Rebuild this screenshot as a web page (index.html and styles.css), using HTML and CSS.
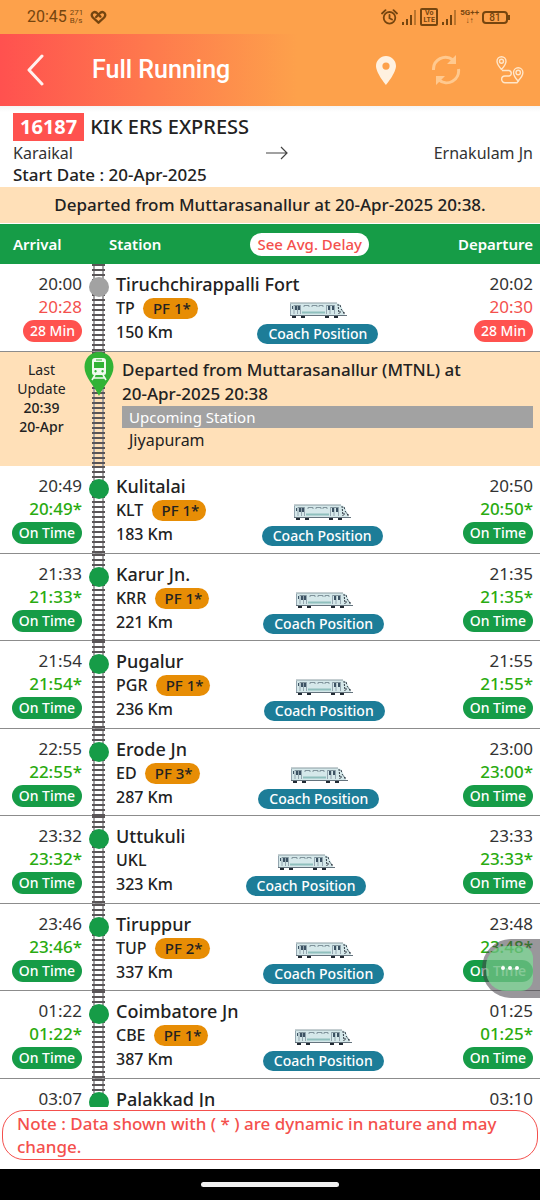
FILE: index.html
```html
<!DOCTYPE html>
<html lang="en">
<head>
    <meta charset="UTF-8">
    <meta name="viewport" content="width=device-width, initial-scale=1.0">
    <title>Full Running</title>
    <link rel="stylesheet" href="styles.css">
</head>
<body>
    <!-- Shared drawings -->
    <svg class="sprite" aria-hidden="true">
        <symbol id="train" viewBox="0 0 58 16">
            <path d="M1 1h46l4 1 4 8 1 3H1z" fill="#d5e8ea"/>
            <path d="M1 1h47" stroke="#8b9ca2" stroke-width="1"/>
            <path d="M13 9.500h23v2H13z" fill="#8fbfbd"/>
            <path d="M1 13.500h57" stroke="#65737d" stroke-width="1"/>
            <path d="M1.500 2v11M5 3v9M8.500 3v9M11.500 3v9M37.500 3v9M41 3v9M45.500 3v9" stroke="#93a5af" stroke-width="1"/>
            <path d="M5 3.500h6M38 3.500h7M15 5v-1.500h5V5M23 5v-1.500h5V5M30 5v-1.500h4V5" fill="none" stroke="#81949c"/>
            <path d="M3 4h1v3H3zM6 4h2v4H6zM9 4h2v4H9zM39 4h2v4h-2zM43 4h2v4h-2z" fill="#3c5263"/>
            <path d="M49 2l1 10M51 3l1 3M52 7l3 4M51 9v3M55 10v3" fill="none" stroke="#2e3842" stroke-dasharray="2 1"/>
            <path d="M3 14h4v2H3zM12 14h4v2h-4zM36 14h4v2h-4zM45 14h4v2h-4z" fill="#222b34"/>
        </symbol>
        <symbol id="signal" viewBox="0 0 16 15">
            <path d="M1 12h2v3H1zM5 9h2v6H5zM9 5h2v10H9z" fill="#75450f"/>
            <path d="M13 0h2v15h-2z" fill="#bb762f"/>
        </symbol>
    </svg>

    <div class="app">
        <div class="status">
            <span class="clock">20:45</span>
            <span class="speed">271<br>B/s</span>
            <svg class="heart" width="17" height="15" viewBox="0 0 18 15" fill="none" stroke="#75450f" stroke-width="2.500" stroke-linejoin="round" stroke-linecap="round">
                <path d="M9 13L3 7.500C0 4 4 0 7 2.500L11 6.500M6.500 7L11 2.500C14 0 18 4 15 7.500L9 13"/>
            </svg>
            <span class="spacer"></span>
            <svg width="17" height="16" viewBox="0 0 17 16" fill="none" stroke="#75450f" stroke-width="1.800" stroke-linecap="round">
                <circle cx="8.500" cy="8.800" r="5.800"/>
                <path d="M1 4.500L4.500 1.200M16 4.500L12.500 1.200M8.500 6v3.300l2.500 1.200"/>
            </svg>
            <svg width="16" height="15"><use href="#signal"/></svg>
            <span class="volte">Vo<br>LTE</span>
            <svg width="16" height="15"><use href="#signal"/></svg>
            <span class="network">5G++<br>↓↑</span>
            <span class="battery">81</span>
        </div>

        <header class="topbar">
            <button class="icon-btn back" aria-label="Back">
                <svg width="18" height="32" viewBox="0 0 18 32" fill="none" stroke="#fff1ee" stroke-width="3" stroke-linecap="round" stroke-linejoin="round">
                    <path d="M15 2L2 16l13 14"/>
                </svg>
            </button>
            <h1>Full Running</h1>
            <button class="icon-btn" aria-label="Location">
                <svg width="20" height="29" viewBox="0 0 20 29" fill="#fff1e0">
                    <path fill-rule="evenodd" d="M10 0C4.500 0 0 4.500 0 10c0 7 10 19 10 19s10-12 10-19C20 4.500 15.500 0 10 0zm0 6.500a3.600 3.600 0 1 1 0 7.200 3.600 3.600 0 0 1 0-7.200z"/>
                </svg>
            </button>
            <button class="icon-btn" aria-label="Refresh">
                <svg width="30" height="30" viewBox="0 0 30 30" fill="none" stroke="#ffc98f" stroke-width="3">
                    <path d="M2.500 15A12 12 0 0 1 22 5M27.500 14A12 12 0 0 1 8 25"/>
                    <path d="M25 0v9h-9zM5 30v-9h9z" fill="#ffc98f" stroke="none"/>
                </svg>
            </button>
            <button class="icon-btn" aria-label="Route map">
                <svg width="28" height="28" viewBox="0 0 28 28" fill="none" stroke="#ffe6c9" stroke-width="1.400" stroke-linejoin="round">
                    <path d="M5.500 13.500S1 8.500 1 5.300a4.500 4.500 0 0 1 9 0c0 3.200-4.500 8.200-4.500 8.200zM22 25s-4.500-5-4.500-8.500a4.700 4.700 0 0 1 9.400 0C26.900 20 22 25 22 25z"/>
                    <circle cx="5.500" cy="5.300" r="2"/>
                    <circle cx="22.200" cy="16.500" r="2.200"/>
                    <path d="M6 14.500h7a2.800 2.800 0 0 1 0 5.500H9a3.300 3.300 0 0 0 0 6.700h12l2-2.500"/>
                </svg>
            </button>
        </header>

        <section class="info">
            <div class="train-name"><span class="number">16187</span> KIK ERS EXPRESS</div>
            <div class="ends">
                <span>Karaikal</span>
                <svg width="22" height="14" viewBox="0 0 22 14" fill="none" stroke="#444" stroke-width="1.200"><path d="M0 7h21M15 1l6 6-6 6"/></svg>
                <span class="to">Ernakulam Jn</span>
            </div>
            <div class="start">Start Date : 20-Apr-2025</div>
        </section>

        <div class="banner">Departed from Muttarasanallur at 20-Apr-2025 20:38.</div>

        <table class="route">
            <thead>
                <tr class="head">
                    <th>Arrival</th>
                    <th>Station</th>
                    <th><button class="delay-btn">See Avg. Delay</button></th>
                    <th>Departure</th>
                </tr>
            </thead>
            <tbody>
                <tr class="stop late">
                    <td class="time">20:00<b>20:28</b><span class="tag">28 Min</span></td>
                    <td class="track"><i class="dot passed"></i></td>
                    <td class="station">
                        <strong>Tiruchchirappalli Fort</strong>
                        <div class="detail">
                            <div class="code">TP <span class="pf">PF 1*</span><br>150 Km</div>
                            <div class="coach"><svg width="58" height="16"><use href="#train"/></svg><button>Coach Position</button></div>
                        </div>
                    </td>
                    <td class="time">20:02<b>20:30</b><span class="tag">28 Min</span></td>
                </tr>
                <tr class="update">
                    <td class="last">Last<br>Update<br><b>20:39<br>20-Apr</b></td>
                    <td class="track">
                        <svg class="marker" width="30" height="44" viewBox="0 0 30 44">
                            <path d="M15 0C6.500 0 .500 6.500.500 15 .500 25 10 33 15 44c5-11 14.500-19 14.500-29C29.500 6.500 23.500 0 15 0z" fill="#31b335"/>
                            <path fill-rule="evenodd" fill="#effbee" d="M11 6h8q3 0 3 3v12q0 2-2 2h-10q-2 0-2-2V9q0-3 3-3zm-1 4v6h10v-6zM12 7.500v1h6v-1zM11.500 18a1.200 1.200 0 1 0 .1 0zM18.500 18a1.200 1.200 0 1 0 .1 0z"/>
                            <path d="M11 23l-3 5M19 23l3 5M10 26h10" stroke="#effbee" stroke-width="1.600"/>
                        </svg>
                    </td>
                    <td class="message" colspan="2">
                        <p>Departed from Muttarasanallur (MTNL) at 20-Apr-2025 20:38</p>
                        <div class="upcoming">Upcoming Station</div>
                        <div class="next">Jiyapuram</div>
                    </td>
                </tr>
                <tr class="stop">
                    <td class="time">20:49<b>20:49*</b><span class="tag">On Time</span></td>
                    <td class="track"><i class="dot"></i></td>
                    <td class="station">
                        <strong>Kulitalai</strong>
                        <div class="detail">
                            <div class="code">KLT <span class="pf">PF 1*</span><br>183 Km</div>
                            <div class="coach"><svg width="58" height="16"><use href="#train"/></svg><button>Coach Position</button></div>
                        </div>
                    </td>
                    <td class="time">20:50<b>20:50*</b><span class="tag">On Time</span></td>
                </tr>
                <tr class="stop">
                    <td class="time">21:33<b>21:33*</b><span class="tag">On Time</span></td>
                    <td class="track"><i class="dot"></i></td>
                    <td class="station">
                        <strong>Karur Jn.</strong>
                        <div class="detail">
                            <div class="code">KRR <span class="pf">PF 1*</span><br>221 Km</div>
                            <div class="coach"><svg width="58" height="16"><use href="#train"/></svg><button>Coach Position</button></div>
                        </div>
                    </td>
                    <td class="time">21:35<b>21:35*</b><span class="tag">On Time</span></td>
                </tr>
                <tr class="stop">
                    <td class="time">21:54<b>21:54*</b><span class="tag">On Time</span></td>
                    <td class="track"><i class="dot"></i></td>
                    <td class="station">
                        <strong>Pugalur</strong>
                        <div class="detail">
                            <div class="code">PGR <span class="pf">PF 1*</span><br>236 Km</div>
                            <div class="coach"><svg width="58" height="16"><use href="#train"/></svg><button>Coach Position</button></div>
                        </div>
                    </td>
                    <td class="time">21:55<b>21:55*</b><span class="tag">On Time</span></td>
                </tr>
                <tr class="stop">
                    <td class="time">22:55<b>22:55*</b><span class="tag">On Time</span></td>
                    <td class="track"><i class="dot"></i></td>
                    <td class="station">
                        <strong>Erode Jn</strong>
                        <div class="detail">
                            <div class="code">ED <span class="pf">PF 3*</span><br>287 Km</div>
                            <div class="coach"><svg width="58" height="16"><use href="#train"/></svg><button>Coach Position</button></div>
                        </div>
                    </td>
                    <td class="time">23:00<b>23:00*</b><span class="tag">On Time</span></td>
                </tr>
                <tr class="stop">
                    <td class="time">23:32<b>23:32*</b><span class="tag">On Time</span></td>
                    <td class="track"><i class="dot"></i></td>
                    <td class="station">
                        <strong>Uttukuli</strong>
                        <div class="detail">
                            <div class="code">UKL<br>323 Km</div>
                            <div class="coach"><svg width="58" height="16"><use href="#train"/></svg><button>Coach Position</button></div>
                        </div>
                    </td>
                    <td class="time">23:33<b>23:33*</b><span class="tag">On Time</span></td>
                </tr>
                <tr class="stop">
                    <td class="time">23:46<b>23:46*</b><span class="tag">On Time</span></td>
                    <td class="track"><i class="dot"></i></td>
                    <td class="station">
                        <strong>Tiruppur</strong>
                        <div class="detail">
                            <div class="code">TUP <span class="pf">PF 2*</span><br>337 Km</div>
                            <div class="coach"><svg width="58" height="16"><use href="#train"/></svg><button>Coach Position</button></div>
                        </div>
                    </td>
                    <td class="time">
                        23:48<b>23:48*</b><span class="tag">On Time</span>
                        <button class="assist" aria-label="Quick menu">
                            <span><svg width="20" height="6" fill="#fff"><circle cx="3" cy="3" r="2"/><circle cx="10" cy="3" r="2"/><circle cx="17" cy="3" r="2"/></svg></span>
                        </button>
                    </td>
                </tr>
                <tr class="stop">
                    <td class="time">01:22<b>01:22*</b><span class="tag">On Time</span></td>
                    <td class="track"><i class="dot"></i></td>
                    <td class="station">
                        <strong>Coimbatore Jn</strong>
                        <div class="detail">
                            <div class="code">CBE <span class="pf">PF 1*</span><br>387 Km</div>
                            <div class="coach"><svg width="58" height="16"><use href="#train"/></svg><button>Coach Position</button></div>
                        </div>
                    </td>
                    <td class="time">01:25<b>01:25*</b><span class="tag">On Time</span></td>
                </tr>
                <tr class="stop cut">
                    <td class="time">03:07</td>
                    <td class="track"><i class="dot"></i></td>
                    <td class="station"><strong>Palakkad Jn</strong></td>
                    <td class="time">03:10</td>
                </tr>
            </tbody>
        </table>

        <p class="note">Note : Data shown with ( * ) are dynamic in nature and may change.</p>
        <div class="navbar"><span></span></div>
    </div>
</body>
</html>
```
FILE: styles.css
```css
* {
    box-sizing: border-box;
}

body {
    margin: 0;
    font-family: "Noto Sans", sans-serif;
    font-size: 17px;
    line-height: 24px;
    color: #222;
    background-color: #fff;
}

button {
    border: 0;
    padding: 0;
    background: none;
    font-family: inherit;
    cursor: pointer;
}

svg {
    display: block;
    flex: none;
}

.sprite {
    position: absolute;
    width: 0;
    height: 0;
}

.app {
    display: flex;
    flex-direction: column;
    height: 100vh;
    overflow: hidden;
}

/* Phone status bar */
.status {
    display: flex;
    align-items: center;
    gap: 3px;
    height: 34px;
    padding: 0 30px 0 27px;
    background-color: #fda14b;
    color: #75450f;
    font-family: Roboto, sans-serif;
}

.clock {
    font-size: 16px;
}

.speed {
    font-size: 8px;
    line-height: 8px;
}

.heart {
    margin-left: 4px;
}

.spacer {
    flex: 1;
}

.volte {
    width: 18px;
    height: 18px;
    border: 2px solid #75450f;
    border-radius: 2px;
    font-size: 7px;
    font-weight: 700;
    line-height: 7px;
    text-align: center;
}

.network {
    font-size: 8px;
    font-weight: 700;
    line-height: 8px;
    text-align: center;
}

.battery {
    width: 26px;
    height: 13px;
    border: 2px solid #75450f;
    border-radius: 4px;
    font-size: 10px;
    font-weight: 500;
    line-height: 10px;
    text-align: center;
}

/* battery tip */
.status::after {
    content: "";
    width: 2px;
    height: 5px;
    margin-left: -3px;
    background-color: #75450f;
}

/* Title bar */
.topbar {
    display: flex;
    align-items: center;
    height: 72px;
    padding: 0 16px 0 27px;
    background: linear-gradient(to right, #ff514f, #fda14b 55%);
}

.topbar h1 {
    flex: 1;
    margin: 0 0 0 47px;
    color: #fff;
    font-family: Roboto, sans-serif;
    font-size: 25px;
    font-weight: 500;
}

.icon-btn + .icon-btn {
    margin-left: 35px;
}

/* Train details */
.info {
    height: 81px;
    padding: 6px 7px 0 13px;
    background: linear-gradient(#f4f4f4, #fff 6px);
}

.train-name {
    display: flex;
    align-items: center;
    gap: 6px;
    height: 29px;
    font-size: 20px;
    font-weight: 500;
}

.number {
    padding: 0 7px;
    background-color: #ff524f;
    color: #fff;
    font-weight: 700;
    line-height: 28px;
}

.ends {
    display: grid;
    grid-template-columns: 1fr auto 1fr;
    align-items: center;
    height: 23px;
    font-size: 16px;
    color: #333;
}

.ends svg {
    margin-left: 8px;
}

.to {
    text-align: right;
}

.start {
    font-weight: 500;
    line-height: 22px;
}

.banner {
    height: 37px;
    border-bottom: 1px solid #fff;
    background-color: #ffe0b8;
    font-weight: 500;
    line-height: 36px;
    text-align: center;
}

/* Route table */
.route {
    display: grid;
    flex: 1;
    grid-template-rows: 40px 88px 114px repeat(7, 1fr) 28px;
    min-height: 0;
}

.route thead,
.route tbody {
    display: contents;
}

.route th,
.route td {
    padding: 0;
}

.head {
    display: grid;
    grid-template-columns: 96px 1fr auto 164px;
    align-items: center;
    padding: 0 7px 0 13px;
    background-color: #169c47;
    color: #fff;
    font-size: 15px;
}

.head th {
    font-weight: 600;
    text-align: left;
}

.head th:last-child {
    text-align: right;
}

.delay-btn {
    display: block;
    height: 23px;
    padding: 0 7px;
    border-radius: 12px;
    background-color: #fff;
    color: #f4504d;
    font-size: 15px;
    font-weight: 500;
}

.stop,
.update {
    display: grid;
    grid-template-columns: 82px 34px 1fr 102px;
    border-bottom: 1px solid #8c8c8c;
}

.time {
    position: relative;
    display: flex;
    flex-direction: column;
    align-items: flex-end;
    line-height: 23px;
    color: #333;
}

.stop .time {
    padding-top: 8px;
}

.stop .time:last-child {
    padding-right: 7px;
}

.time b {
    color: #2aab10;
    font-weight: 500;
}

.late .time b {
    color: #f4504d;
    font-weight: 400;
}

.tag {
    margin-top: 2px;
    padding: 0 7px;
    border-radius: 11px;
    background-color: #169c47;
    color: #fff;
    font-size: 14px;
    font-weight: 500;
    line-height: 22px;
}

.late .tag {
    background-color: #ff524f;
}

/* Rails with sleepers, running through the row lines */
.track {
    display: flex;
    justify-content: center;
    align-items: flex-start;
    margin-bottom: -1px;
    background:
        repeating-linear-gradient(#5a5557 0, #5a5557 2px, transparent 2px, transparent 5px) 10px 0 / 13px 100% no-repeat,
        linear-gradient(to right, transparent 1px, #a3a2a4 1px, #a3a2a4 3px, transparent 3px, transparent 10px, #a3a2a4 10px, #a3a2a4 12px, transparent 12px) 10px 0 / 13px 100% no-repeat;
}

.dot {
    width: 20px;
    height: 20px;
    margin-top: 13px;
    border-radius: 50%;
    background-color: #169c47;
}

.passed {
    background-color: #a2a2a2;
}

.route .station {
    padding-top: 8px;
}

.station strong {
    display: block;
    font-size: 18px;
    font-weight: 500;
}

.detail {
    display: flex;
}

.code {
    min-width: 58px;
    font-size: 16px;
    font-weight: 500;
    white-space: nowrap;
}

.pf {
    display: inline-block;
    margin-left: 4px;
    padding: 0 7px 0 10px;
    border-radius: 11px;
    background-color: #e78d05;
    font-size: 15px;
    line-height: 21px;
}

.coach {
    display: flex;
    flex: 1;
    flex-direction: column;
    align-items: center;
    gap: 6px;
    padding-top: 6px;
}

.coach button {
    height: 20px;
    padding: 0 11px;
    border-radius: 10px;
    background-color: #1d7d98;
    color: #fff;
    font-size: 14px;
    font-weight: 500;
    line-height: 20px;
}

/* Current position */
.update {
    grid-template-columns: 82px 34px 1fr;
    border-bottom: 0;
    background-color: #ffe0b8;
}

.update .track {
    margin-bottom: 0;
}

.last {
    font-size: 14px;
    line-height: 19px;
    text-align: center;
}

.route .last {
    padding: 8px 0 0 1px;
}

.last b {
    font-weight: 500;
}

.route .message {
    padding: 6px 7px 0 6px;
}

.message p {
    max-width: 350px;
    margin: 0;
    font-weight: 500;
}

.upcoming {
    padding-left: 7px;
    background-color: #a2a2a2;
    color: #fff;
    font-size: 15px;
    line-height: 22px;
}

.next {
    padding-left: 7px;
    font-size: 16px;
}

.cut {
    overflow: hidden;
    border-bottom: 0;
}

/* Floating phone shortcut, lies over the list */
.assist {
    position: absolute;
    top: 35px;
    right: 0;
    width: 58px;
    height: 59px;
    padding: 7px 7px 7px 4px;
    border-radius: 29px 0 0 29px;
    background-color: rgba(70, 66, 72, 0.55);
}

.assist span {
    display: flex;
    align-items: center;
    justify-content: center;
    height: 45px;
    border-radius: 20px 12px 12px 20px;
    background-color: rgba(122, 235, 150, 0.6);
}

.note {
    margin: 3px 2px 9px;
    padding: 1px 14px;
    border: 1px solid #f4504d;
    border-radius: 22px;
    color: #f4504d;
    font-weight: 500;
    line-height: 23px;
}

.navbar {
    display: flex;
    flex: none;
    justify-content: center;
    height: 31px;
    padding-top: 13px;
    background-color: #000;
}

.navbar span {
    width: 138px;
    height: 5px;
    border-radius: 3px;
    background-color: #f0f0f0;
}
```
